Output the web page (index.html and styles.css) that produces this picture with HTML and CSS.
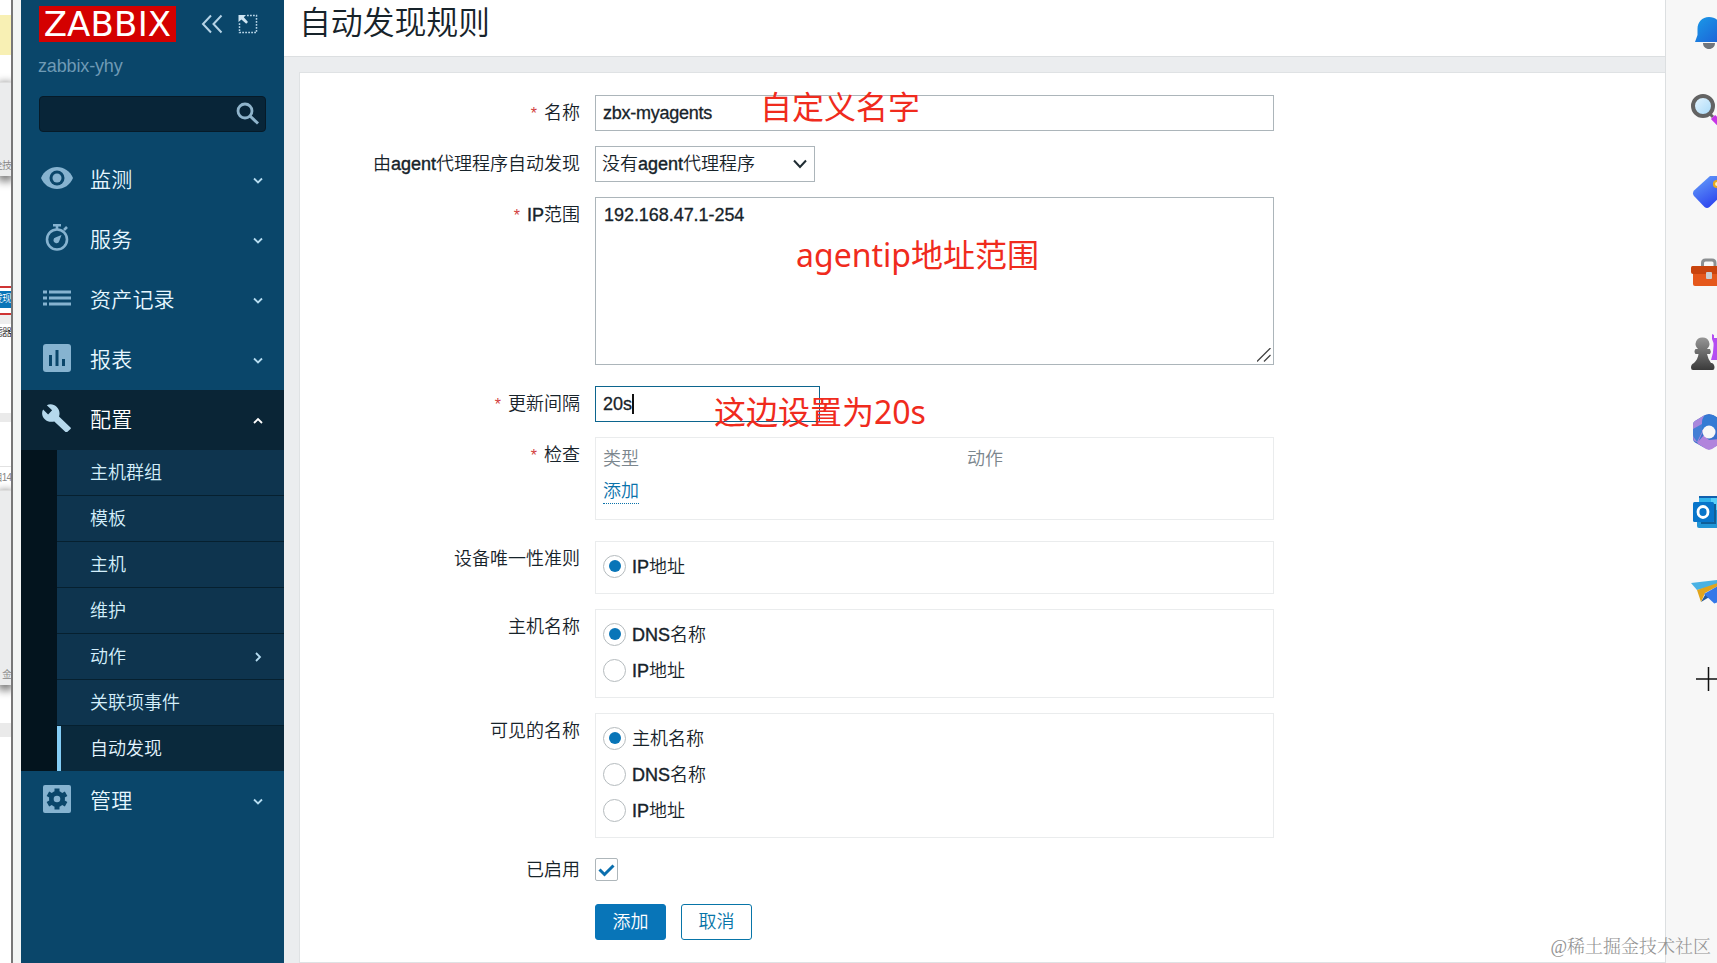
FILE: index.html
```html
<!DOCTYPE html>
<html lang="zh-CN">
<head>
<meta charset="utf-8">
<title>自动发现规则</title>
<link rel="stylesheet" href="styles.css">
</head>
<body>
<div class="app">
  <div class="backdrop">
    <div class="bk-yellow"></div>
    <div class="bk-panel"><span>全技</span></div>
    <div class="bk-tab"><span>发现</span></div>
    <div class="bk-filter"><span>滤器</span></div>
    <div class="bk-band"></div>
    <div class="bk-lines"></div>
    <div class="bk-num"><span>目14</span></div>
    <div class="bk-panel bk-panel-low"><span>金</span></div>
    <div class="bk-band bk-band-low"></div>
  </div>
  <div class="frame"></div>

  <aside class="sidebar">
    <div class="brand">
      <div class="logo"><span>ZABBIX</span></div>
      <svg class="ic-collapse" width="22" height="20" viewBox="0 0 22 20"><path d="M10 1.500L2 10l8 8.500M20.500 1.500L12.500 10l8 8.500" fill="none" stroke="#b5d3e6" stroke-width="2"/></svg>
      <svg class="ic-kiosk" width="20" height="20" viewBox="0 0 20 20"><path d="M9 1.500H18.500V18.500H1.500V9" fill="none" stroke="#b5d3e6" stroke-width="1.500" stroke-dasharray="1.800 1.200"/><path d="M0.500 1H8L5.800 3.200l4.200 4.800-1.800 1.800-4.800-4.400L0.500 8z" fill="#cfe5f2"/></svg>
    </div>
    <div class="server">zabbix-yhy</div>
    <div class="search"><svg width="24" height="24" viewBox="0 0 24 24"><circle cx="9" cy="9" r="7" fill="none" stroke="#8fb4cb" stroke-width="2.800"/><path d="M14 14l8 7.500" stroke="#8fb4cb" stroke-width="3"/></svg></div>
    <nav class="menu">
      <div class="item"><svg class="mi" width="34" height="28" viewBox="0 0 34 28"><path d="M1 14C4 7 10 3 17 3s13 4 16 11c-3 7-9 11-16 11S4 21 1 14z" fill="#86b3d0"/><circle cx="17" cy="14" r="7.500" fill="#0a466a"/><circle cx="17" cy="14" r="4.500" fill="#86b3d0"/></svg><span>监测</span><svg class="chev" width="10" height="8" viewBox="0 0 10 8"><path d="M1 1.500l4 4 4-4"/></svg></div>
      <div class="item"><svg class="mi" width="34" height="28" viewBox="0 0 34 28"><circle cx="17" cy="15.500" r="10" fill="none" stroke="#86b3d0" stroke-width="2.600"/><path d="M13 1.300h8M17 1.300v4M24 6l3-3" stroke="#86b3d0" stroke-width="2.600"/><path d="M21.500 11l-2.200 6a3 3 0 1 1-3.300-3.800z" fill="#86b3d0"/></svg><span>服务</span><svg class="chev" width="10" height="8" viewBox="0 0 10 8"><path d="M1 1.500l4 4 4-4"/></svg></div>
      <div class="item"><svg class="mi" width="34" height="28" viewBox="0 0 34 28"><path d="M3 8h4M9 8h22M3 14h4M9 14h22M3 20h4M9 20h22" stroke="#86b3d0" stroke-width="3"/></svg><span>资产记录</span><svg class="chev" width="10" height="8" viewBox="0 0 10 8"><path d="M1 1.500l4 4 4-4"/></svg></div>
      <div class="item"><svg class="mi" width="34" height="28" viewBox="0 0 34 28"><rect x="3" width="28" height="28" rx="3" fill="#86b3d0"/><path d="M10.500 11v11M17 6v16M23.500 15v7" stroke="#0a466a" stroke-width="3"/></svg><span>报表</span><svg class="chev" width="10" height="8" viewBox="0 0 10 8"><path d="M1 1.500l4 4 4-4"/></svg></div>
      <div class="item open"><svg class="mi" width="34" height="28" viewBox="0 0 34 28"><path d="M30.500 23.500L19 12.500c1.200-3.300.4-7-2.200-9.600C14 .2 10 -.3 6.800 1.200l5.300 5-4 4.200-5-5C1.300 8.500 2 12.600 4.800 15.200c2.500 2.500 6.200 3.200 9.500 2.200l11.200 10.600c.5.500 1.200.5 1.700 0l3.300-3c.5-.4.5-1.100 0-1.500z" fill="#b5d8ec"/></svg><span>配置</span><svg class="chev" width="10" height="8" viewBox="0 0 10 8"><path d="M1 6l4-4 4 4"/></svg></div>
      <div class="submenu">
        <div class="sub">主机群组</div>
        <div class="sub">模板</div>
        <div class="sub">主机</div>
        <div class="sub">维护</div>
        <div class="sub">动作<svg class="chev" width="8" height="10" viewBox="0 0 8 10"><path d="M2 1l4 4-4 4"/></svg></div>
        <div class="sub">关联项事件</div>
        <div class="sub current">自动发现</div>
      </div>
      <div class="item"><svg class="mi" width="34" height="28" viewBox="0 0 34 28"><rect x="3" width="28" height="28" rx="2" fill="#86b3d0"/><circle cx="17" cy="14" r="5.500" fill="none" stroke="#0a466a" stroke-width="5"/><path d="M17 3.500v21M7.900 8.750l18.200 10.500M7.900 19.250l18.200-10.500" stroke="#0a466a" stroke-width="5"/><circle cx="17" cy="14" r="3.300" fill="#86b3d0"/></svg><span>管理</span><svg class="chev" width="10" height="8" viewBox="0 0 10 8"><path d="M1 1.500l4 4 4-4"/></svg></div>
    </nav>
  </aside>

  <main class="main">
    <header class="head"><h1>自动发现规则</h1></header>
    <section class="card">
      <div class="row"><div class="label"><i>*</i>名称</div><div class="input wide"><span class="host">zbx-myagents</span><span class="note note-name">自定义名字</span></div></div>
      <div class="row"><div class="label">由<b>agent</b>代理程序自动发现</div><div class="input select"><span>没有<b>agent</b>代理程序</span><svg width="14" height="10" viewBox="0 0 14 10"><path d="M1 1.500l6 6.500 6-6.500" fill="none" stroke="#1f2c33" stroke-width="2"/></svg></div></div>
      <div class="row gap"><div class="label"><i>*</i><b>IP</b>范围</div><div class="input wide area"><span class="range">192.168.47.1-254</span><span class="note note-ip">agentip地址范围</span><svg class="grip" width="14" height="14" viewBox="0 0 14 14"><path d="M0 13.500L13.500 0M7 13.500L13.500 7" stroke="#444" stroke-width="1.300"/></svg></div></div>
      <div class="row"><div class="label"><i>*</i>更新间隔</div><div class="input focus"><span>20s</span><span class="caret"></span><span class="note note-delay">这边设置为20s</span></div></div>
      <div class="row gap"><div class="label"><i>*</i>检查</div><div class="box checks"><div class="th"><span>类型</span><span>动作</span></div><a>添加</a></div></div>
      <div class="row"><div class="label">设备唯一性准则</div><div class="box"><div class="opt"><em class="radio on"></em><span><b>IP</b>地址</span></div></div></div>
      <div class="row"><div class="label">主机名称</div><div class="box"><div class="opt"><em class="radio on"></em><span><b>DNS</b>名称</span></div><div class="opt"><em class="radio"></em><span><b>IP</b>地址</span></div></div></div>
      <div class="row visible"><div class="label">可见的名称</div><div class="box"><div class="opt"><em class="radio on"></em><span>主机名称</span></div><div class="opt"><em class="radio"></em><span><b>DNS</b>名称</span></div><div class="opt"><em class="radio"></em><span><b>IP</b>地址</span></div></div></div>
      <div class="row enabled"><div class="label">已启用</div><div class="check"><svg width="17" height="14" viewBox="0 0 17 14"><path d="M1.500 6.500l5 5 9-9" fill="none" stroke="#0b6fae" stroke-width="3"/></svg></div></div>
      <div class="row"><div class="label"></div><div class="buttons"><div class="btn primary">添加</div><div class="btn">取消</div></div></div>
    </section>
  </main>

  <aside class="dock">
    <svg width="30" height="80" viewBox="0 0 30 80"><defs><linearGradient id="bell" x2="1" y2="1"><stop stop-color="#1a9be8"/><stop offset="1" stop-color="#1c5fd6"/></linearGradient></defs><path d="M16 51h12c0 3.500-2.500 6-6 6s-6-2.500-6-6z" fill="#70757c"/><path d="M10.500 37C10.500 30 15 25 22 25s12 5 12 12v6l2 7H8l2.500-7z" fill="url(#bell)"/></svg>
    <svg width="30" height="80" viewBox="0 0 30 80"><defs><linearGradient id="lens" x2="1" y2="1"><stop stop-color="#e8f6ff"/><stop offset="1" stop-color="#a5d8f8"/></linearGradient></defs><path d="M22 41l4 4" stroke="#666" stroke-width="3"/><path d="M26 45l9 9" stroke="#c636e6" stroke-width="6"/><circle cx="16" cy="34" r="10" fill="url(#lens)" stroke="#636363" stroke-width="4"/></svg>
    <svg width="30" height="80" viewBox="0 0 30 80"><defs><linearGradient id="tag" x2=".6" y2="1"><stop stop-color="#68a4fa"/><stop offset="1" stop-color="#2b42ee"/></linearGradient></defs><path d="M23 24h15v16L22.500 55q-2.500 2-5 0L7 44q-2-3 0-5.500z" fill="url(#tag)"/><circle cx="30" cy="32" r="3" fill="#fff3c0" stroke="#e6aa20" stroke-width="2.200"/></svg>
    <svg width="30" height="80" viewBox="0 0 30 80"><path d="M15.500 35v-4q0-3 3-3H25q3 0 3 3v4" fill="none" stroke="#8c8f92" stroke-width="3"/><path d="M6 40h28v14H8q-2 0-2-2z" fill="#e5581c"/><path d="M5.500 34H34v8H6q-2 0-2-2v-4.500q0-1.500 1.500-1.500z" fill="#c9440e"/><rect x="19" y="40" width="6" height="7" rx="1" fill="#c9cdd0"/></svg>
    <svg width="30" height="80" viewBox="0 0 30 80"><defs><linearGradient id="pawn" x2="0" y2="1"><stop stop-color="#969696"/><stop offset="1" stop-color="#3a3a3a"/></linearGradient></defs><path d="M25 22l2 1 0 3h8v22H24q3-8 2.500-17l-1.500-4z" fill="#b44df2"/><path d="M15.500 25.500a6.500 6.500 0 0 1 4.500 11.500h3q1.500 2.500 0 5h-3q1 5 4 9h1q2.500 1 2.500 4.500 0 2.500-2 2.500H6q-2 0-2-2.500Q4 52 7 51h0q4-4 4.500-9h-3q-2-2.500 0-5H11a6.500 6.500 0 0 1 4.500-11.500z" fill="url(#pawn)"/></svg>
    <svg width="30" height="80" viewBox="0 0 30 80"><path d="M17 23.500q5-3 10 0l9 5v22l-14 7-6-2.500-8-4.500q-2-1.500-2-4V33q0-3 2-4z" fill="#3a70cc"/><path d="M6 45V33q0-3 2-4l9-5.500-1 16-5 11q-5-1-5-5.500z" fill="#a987dc"/><path d="M8 47q-2-2-2-4V37l9-5v8L10 50z" fill="#447fd5"/><path d="M10 51L17 43l5 5 12-1v4l-9 6q-3 1.500-6 0z" fill="#b184dc"/><path d="M15 38v-8q0-4 3-6.500l8-.5 9 6v7z" fill="#347bd4"/><circle cx="22" cy="40" r="6.500" fill="#f7f7f7"/></svg>
    <svg width="30" height="80" viewBox="0 0 30 80"><rect x="12" y="24" width="20" height="16" fill="#32b4ec"/><rect x="12" y="24" width="20" height="2" fill="#1260ae"/><path d="M24 26h8v12h-8z" fill="#58d0fa"/><path d="M10 38h22v18H12q-2 0-2-2z" fill="#2295d6"/><path d="M27 32h2v20H14v-2h13z" fill="#0f5f99"/><rect x="6" y="30" width="21" height="20" rx="1.500" fill="#0875ca"/><ellipse cx="16" cy="40" rx="5" ry="5.500" fill="none" stroke="#fff" stroke-width="2.800"/></svg>
    <svg width="30" height="80" viewBox="0 0 30 80"><path d="M4 31l27-3v5l-21 5z" fill="#4ab2e4"/><path d="M14 50l4-7 8-3-2 4z" fill="#22589c"/><path d="M10 38l21-7v3l-13 7-4 9z" fill="#e2a51c"/><path d="M17 42l14-8v16l-3.700 1.500z" fill="#3478e8"/></svg>
    <svg class="plus" width="30" height="80" viewBox="0 0 30 80"><path d="M9 40h21M21.500 28v24" stroke="#111" stroke-width="1.500"/></svg>
  </aside>
  <div class="watermark">@稀土掘金技术社区</div>
</div>
</body>
</html>
```
FILE: styles.css
```css
* { box-sizing: border-box; }
body { margin: 0; overflow: hidden; font: 350 18px/24px "Liberation Sans", "Noto Sans CJK SC", sans-serif; color: #17232a; }
.app { position: relative; display: flex; width: 1717px; height: 963px; overflow: hidden; background: #ebedef; }
svg { flex: none; display: block; }

/* window seen behind the left edge */
.backdrop { width: 11px; overflow: hidden; background: #fff; font-size: 10px; line-height: 16px; color: #888; white-space: nowrap; }
.backdrop div { display: flex; justify-content: flex-end; letter-spacing: -1px; }
.bk-yellow { height: 40px; margin-top: 15px; background: #f8f0b4; }
.bk-panel { height: 94px; margin-top: 27px; align-items: flex-end; padding-bottom: 2px; background: #ebeced; border-top: 1px solid #ddd; box-shadow: 0 3px 8px 2px #777; }
.bk-tab { height: 29px; margin-top: 110px; padding: 3px 0 5px; border: solid #cf3434; border-width: 2px 0; color: #fff; background: #0a75b8 content-box; }
.bk-filter { height: 98px; padding-top: 1px; border-top: 9px solid #eee; color: #222; }
.bk-band { height: 9px; background: #eaeaea; }
.bk-lines { height: 45px; border-bottom: 1px solid #e2e2e2; }
.bk-num { height: 23px; padding-top: 3px; }
.bk-panel-low { height: 195px; margin-top: 0; }
.bk-band-low { height: 14px; margin-top: 38px; }
.frame { width: 10px; background: #f3f5f4; border-left: 2px solid #777; }

.sidebar { width: 263px; background: #0a466a; }
.brand { display: flex; align-items: center; height: 36px; margin: 6px 0 0 18px; }
.logo { width: 137px; height: 36px; background: #d40000; color: #fff; font: 34px/37px "DejaVu Sans", sans-serif; text-align: center; letter-spacing: .2px; }
.ic-collapse { margin-left: 25px; }
.ic-kiosk { margin-left: 15px; }
.server { height: 24px; margin: 12px 0 0 17px; color: #6f9ab5; letter-spacing: -.15px; }
.search { display: flex; justify-content: flex-end; align-items: center; width: 227px; height: 36px; margin: 18px 0 18px 18px; padding-right: 5px; background: #082538; border: 1px solid #061a28; border-radius: 4px; }
.item { display: flex; align-items: center; height: 60px; padding: 0 21px 0 19px; color: #e6f7ff; font-size: 21px; }
.item span { letter-spacing: .2px; }
.item .mi { margin: -4px 16px 0 0; }
.chev { margin-left: auto; fill: none; stroke: #b5dcf0; stroke-width: 1.800; }
.item .chev { margin-top: 2px; }
.item.open { background: #0a2536; color: #fff; }
.item.open .chev { stroke: #fff; }
.submenu { height: 321px; padding-left: 36px; background: #03141e; }
.sub { display: flex; align-items: center; height: 46px; padding: 0 22px 0 33px; background: #0e344e; border-bottom: 1px solid #06202f; color: #d4effb; }
.sub.current { height: 45px; padding-left: 29px; border-left: 4px solid #84cdf6; border-bottom: 0; background: #0a293c; color: #e4f5ff; }

.main { width: 1381px; }
.head { height: 57px; background: #fff; border-bottom: 1px solid #dcdfe1; }
h1 { margin: 0; padding: 4px 0 0 15px; font-size: 32px; line-height: 38px; font-weight: 350; letter-spacing: -.2px; }
.card { height: 891px; margin: 15px 0 0 15px; padding-top: 22px; background: #fff; border: 1px solid #dfe2e4; border-right: 0; }
.row { display: flex; margin-bottom: 15px; }
.row.gap { margin-bottom: 21px; }
.row.visible { margin-bottom: 20px; }
.label { width: 280px; height: 36px; margin-right: 15px; line-height: 36px; text-align: right; white-space: nowrap; }
.label i { margin-right: 7px; font-size: 16px; line-height: 20px; font-style: normal; color: #d23d3d; }
b { font-weight: 400; -webkit-text-stroke: .4px; }
.input { position: relative; display: flex; width: 225px; height: 36px; padding: 0 7px; line-height: 34px; border: 1px solid #acb5ba; -webkit-text-stroke: .3px; white-space: nowrap; }
.wide { width: 679px; }
.host { letter-spacing: -.25px; }
.range { letter-spacing: -.05px; }
.select { width: 220px; padding: 0 7px 0 6px; justify-content: space-between; align-items: center; -webkit-text-stroke: 0; }
.area { height: 168px; padding-left: 8px; }
.grip { position: absolute; right: 2px; bottom: 2px; }
.focus { border-color: #0c658e; }
.caret { width: 1.500px; height: 20px; margin-top: 7px; background: #111; }
.note { position: absolute; font: 32px/40px "Noto Sans", "Noto Sans CJK SC", sans-serif; color: #f02b1d; -webkit-text-stroke: 0; }
.note-name { left: 164px; top: -9px; }
.note-ip { left: 200px; top: 37px; }
.note-delay { left: 118px; top: 5px; }
.box { width: 679px; padding: 6px 7px 9px; border: 1px solid #eaeced; }
.checks { height: 83px; padding-top: 9px; }
.th { display: grid; grid-template-columns: 364px 1fr; height: 24px; color: #7b868d; }
.checks a { display: inline-block; margin-top: 8px; line-height: 24px; color: #0a72aa; border-bottom: 1px dotted #0a72aa; }
.opt { display: flex; align-items: center; height: 36px; }
.opt span { padding-top: 2px; }
.radio { display: flex; align-items: center; justify-content: center; width: 23px; height: 23px; margin-right: 6px; border: 1px solid #b5bbbe; border-radius: 50%; }
.radio.on::after { content: ""; width: 12px; height: 12px; border-radius: 50%; background: #0875b8; }
.enabled { margin-bottom: 23px; }
.enabled .label { height: 23px; line-height: 24px; }
.check { display: flex; align-items: center; justify-content: center; width: 23px; height: 23px; border: 1px solid #aeb6ba; border-radius: 2px; }
.buttons { display: flex; gap: 15px; }
.btn { width: 71px; height: 36px; line-height: 34px; text-align: center; color: #0875a8; border: 1px solid #0875a8; border-radius: 3px; }
.primary { background: #0875b8; border-color: #0875b8; color: #fff; }

.dock { width: 52px; padding-left: 21px; overflow: hidden; background: #f7f7f7; border-left: 1px solid #dcdfe1; }
.dock svg:first-child { margin-top: -8px; }
.dock .plus { margin-top: 7px; }
.watermark { position: absolute; right: 6px; bottom: 4px; font: 300 18px/24px "Liberation Serif", "Noto Serif CJK SC", "Noto Sans CJK SC", serif; color: #929292; }
```
